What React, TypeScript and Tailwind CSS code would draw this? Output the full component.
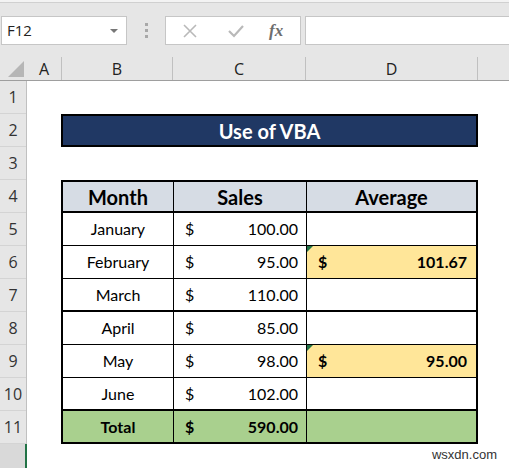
import React from 'react';

// Hoja de cálculo estilo Excel: "Use of VBA"

const rowsData = [
  { month: 'January', sales: '100.00', avg: '' },
  { month: 'February', sales: '95.00', avg: '101.67' },
  { month: 'March', sales: '110.00', avg: '' },
  { month: 'April', sales: '85.00', avg: '' },
  { month: 'May', sales: '98.00', avg: '95.00' },
  { month: 'June', sales: '102.00', avg: '' },
];

const cellFont = { fontFamily: 'Lato, "Open Sans", sans-serif' };

const RowHeader: React.FC<{ n: number }> = ({ n }) => (
  <div className="h-[33px] flex items-center justify-center border-b border-[#d4d4d4] text-[16px] text-[#333]">
    {n}
  </div>
);

const App: React.FC = () => {
  return (
    <div
      className="w-[509px] h-[468px] overflow-hidden bg-white flex flex-col"
      style={{ fontFamily: '"Open Sans", "Noto Sans", sans-serif' }}
    >
      {/* Barra superior */}
      <div className="h-[3px] bg-[#f3f3f3] border-b border-[#d0d0d0]" />

      {/* Barra de fórmulas */}
      <div className="h-[54px] bg-[#e6e6e6] flex items-start pt-[13px]">
        <div className="w-[126px] h-[29px] ml-[1px] bg-white border border-[#c6c6c6] flex items-center justify-between pl-[5px] pr-[8px]">
          <span className="text-[15px] text-[#222]">F12</span>
          <div className="w-0 h-0 border-l-[4px] border-r-[4px] border-t-[4px] border-l-transparent border-r-transparent border-t-[#777]" />
        </div>
        <div className="w-[38px] h-[29px] flex flex-col items-center justify-center gap-[3px]">
          <div className="w-[3px] h-[3px] bg-[#a8a8a8]" />
          <div className="w-[3px] h-[3px] bg-[#a8a8a8]" />
          <div className="w-[3px] h-[3px] bg-[#a8a8a8]" />
        </div>
        <div className="w-[136px] h-[29px] bg-white border border-[#c6c6c6] flex items-center">
          <svg width="16" height="16" viewBox="0 0 16 16" className="ml-[16px]">
            <path d="M2 2 L14 14 M14 2 L2 14" stroke="#b9b9b9" strokeWidth="1.6" fill="none" />
          </svg>
          <svg width="18" height="16" viewBox="0 0 18 16" className="ml-[29px]">
            <path d="M2 8 L7 13 L16 3" stroke="#b9b9b9" strokeWidth="2.2" fill="none" />
          </svg>
          <span
            className="ml-[24px] text-[17px] italic font-bold text-[#6e6e6e]"
            style={{ fontFamily: '"Liberation Serif", serif' }}
          >
            fx
          </span>
        </div>
        <div className="flex-1 h-[29px] ml-[4px] bg-white border border-[#c6c6c6] border-r-0" />
      </div>

      {/* Encabezados de columna */}
      <div className="h-[24px] bg-[#e6e6e6] border-b border-[#9e9e9e] flex text-[16px] text-[#222]">
        <div className="w-[27px] relative">
          <div
            className="absolute right-[3px] bottom-[3px] w-0 h-0"
            style={{ borderBottom: '16px solid #b6b6b6', borderLeft: '16px solid transparent' }}
          />
        </div>
        <div className="w-[35px] flex items-center justify-center border-r border-[#c0c0c0]">A</div>
        <div className="w-[111px] flex items-center justify-center border-r border-[#c0c0c0]">B</div>
        <div className="w-[133px] flex items-center justify-center border-r border-[#c0c0c0]">C</div>
        <div className="w-[172px] flex items-center justify-center border-r border-[#c0c0c0]">D</div>
        <div className="flex-1" />
      </div>

      {/* Cuerpo */}
      <div className="flex flex-1">
        {/* Números de fila */}
        <div className="w-[27px] bg-[#e6e6e6] border-r border-[#c0c0c0] flex flex-col">
          {Array.from({ length: 11 }, (_, i) => (
            <RowHeader key={i} n={i + 1} />
          ))}
          <div className="flex-1 bg-[#d9d9d9] border-r-2 border-[#217346] -mr-[1px]" />
        </div>

        {/* Celdas */}
        <div className="flex-1 flex flex-col pl-[34px] relative" style={cellFont}>
          <div className="h-[33px]" />
          <div className="h-[33px] w-[417px] bg-[#203864] border-2 border-black flex items-center justify-center text-white font-bold text-[20px]">
            Use of VBA
          </div>
          <div className="h-[33px]" />

          <div className="w-[417px] border-2 border-black text-black">
            {/* Encabezado de tabla */}
            <div className="h-[31px] flex bg-[#d6dce4] border-b-2 border-black text-[20px] font-bold">
              <div className="w-[111px] flex items-center justify-center border-r border-black">Month</div>
              <div className="w-[133px] flex items-center justify-center border-r border-black">Sales</div>
              <div className="flex-1 flex items-center justify-center">Average</div>
            </div>

            {rowsData.map((r, i) => (
              <div
                key={r.month}
                className={`h-[33px] flex text-[16px] ${
                  i === 2 || i === 5 ? 'border-b-2' : 'border-b'
                } border-black`}
              >
                <div className="w-[111px] flex items-center justify-center border-r border-black">{r.month}</div>
                <div className="w-[133px] flex items-center justify-between pl-[11px] pr-[8px] border-r border-black">
                  <span>$</span>
                  <span>{r.sales}</span>
                </div>
                {r.avg ? (
                  <div className="flex-1 relative flex items-center justify-between pl-[11px] pr-[9px] bg-[#ffe699] font-bold">
                    <div
                      className="absolute left-0 top-0 w-0 h-0"
                      style={{ borderTop: '6px solid #217346', borderRight: '6px solid transparent' }}
                    />
                    <span>$</span>
                    <span>{r.avg}</span>
                  </div>
                ) : (
                  <div className="flex-1" />
                )}
              </div>
            ))}

            {/* Total */}
            <div className="h-[31px] flex bg-[#a9d08e] text-[16px] font-bold">
              <div className="w-[111px] flex items-center justify-center border-r border-black">Total</div>
              <div className="w-[133px] flex items-center justify-between pl-[11px] pr-[8px] border-r border-black">
                <span>$</span>
                <span>590.00</span>
              </div>
              <div className="flex-1" />
            </div>
          </div>

          <div className="flex-1 flex items-end justify-end pr-[12px] pb-[4px]">
            <span className="text-[13px] text-[#333]" style={{ fontFamily: '"Liberation Sans", sans-serif' }}>
              wsxdn.com
            </span>
          </div>
        </div>
      </div>
    </div>
  );
};

export default App;
